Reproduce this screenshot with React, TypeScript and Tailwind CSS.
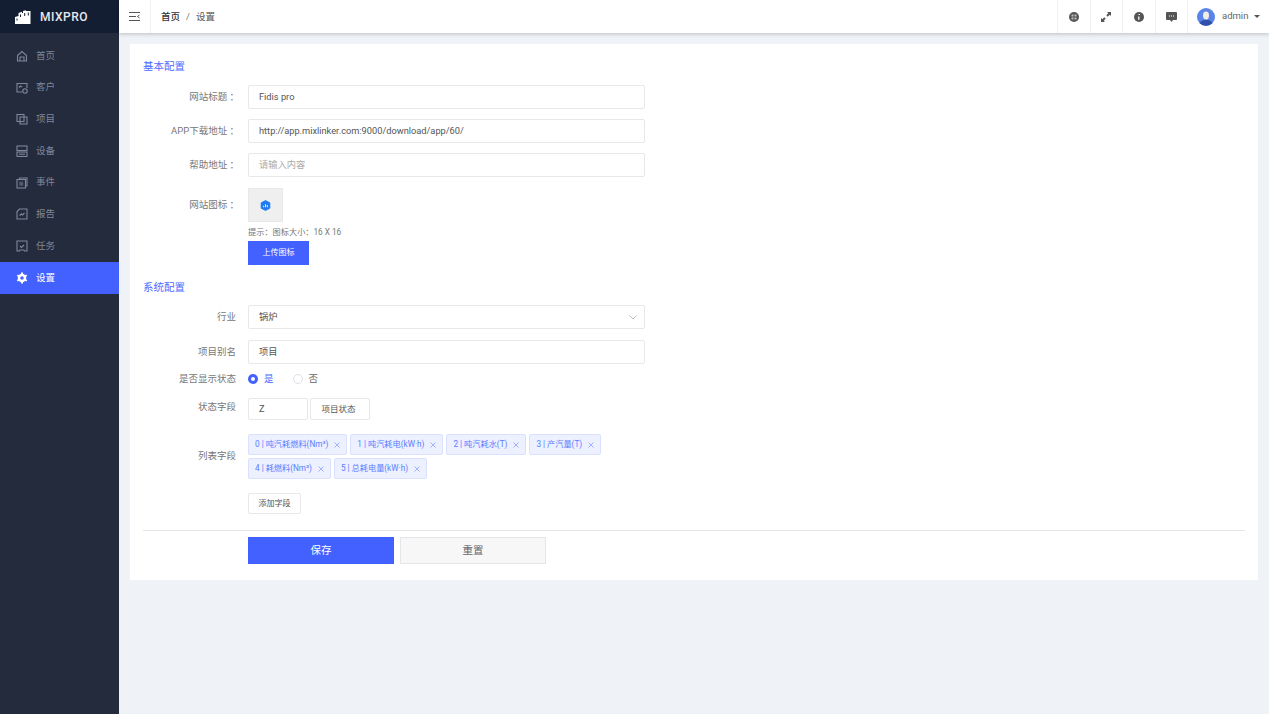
import { ReactNode } from "react"

const NAV = [
	{
		label: "首页",
		icon: (
			<>
				<path d="M1.500 5.500 6 1.500l4.500 4v5.500h-9z" />
				<path d="M4 11V7h4v4" />
			</>
		),
	},
	{
		label: "客户",
		icon: (
			<>
				<path d="M6 10H1V1.500h10V6" />
				<path d="M3 5.500l1.500-1.500L6 5" />
				<circle cx="9" cy="9" r="2.200" />
			</>
		),
	},
	{
		label: "项目",
		icon: (
			<>
				<rect x="1" y="1.500" width="7" height="7" />
				<rect x="4" y="4" width="7" height="7" />
			</>
		),
	},
	{
		label: "设备",
		icon: (
			<>
				<rect x="1" y="1" width="10" height="4.500" />
				<rect x="1" y="7" width="10" height="4.500" />
				<path d="M3 9.200h6" />
			</>
		),
	},
	{
		label: "事件",
		icon: (
			<>
				<path d="M3.500 2.500V1H11v8H9.500" />
				<rect x="1" y="2.500" width="8.500" height="8.500" />
				<rect x="3.200" y="4.700" width="4" height="4" fill="currentColor" fillOpacity="0.5" stroke="none" />
			</>
		),
	},
	{
		label: "报告",
		icon: (
			<>
				<path d="M3.500 1H11v10H1V3.500z" />
				<path d="M3.500 7.500 5.500 6l1 1L8.500 5" />
			</>
		),
	},
	{
		label: "任务",
		icon: (
			<>
				<path d="M1 1h10v10H8.500L8 10H4l-.5 1H1z" />
				<path d="m4 6 1.500 1.500L8 5" />
			</>
		),
	},
]

const TAGS = [
	"0 | 吨汽耗燃料(Nm³)",
	"1 | 吨汽耗电(kW·h)",
	"2 | 吨汽耗水(T)",
	"3 | 产汽量(T)",
	"4 | 耗燃料(Nm³)",
	"5 | 总耗电量(kW·h)",
]

function NavIcon({ children }: { children: ReactNode }) {
	return (
		<svg viewBox="0 0 12 12" className="w-3 h-3 shrink-0" fill="none" stroke="currentColor" strokeWidth="1.100">
			{children}
		</svg>
	)
}

function Sidebar() {
	return (
		<aside className="w-[119px] shrink-0 bg-[#232b3d] flex flex-col">
			<div className="h-[33px] bg-[#141e33] flex items-center pl-[15px] gap-[9px]">
				<svg viewBox="0 0 16 14" className="w-4 h-[14px]" fill="#fff">
					<path d="M0 7l3.500-1V3l3.500-1.200V3h1V1l3-.8V1h4.500v13H0z" />
					<path d="M1.500 8.500h1v2h-1zM5 4.500h1v2.500H5zM9.200 3h1v3h-1zM12.800 2.500h1v3h-1z" fill="#141e33" />
				</svg>
				<span className="text-[#e6e9ef] text-[12px] font-medium tracking-[0.5px]">MIXPRO</span>
			</div>
			<nav className="pt-[7px]">
				{NAV.map(item => (
					<div key={item.label} className="h-[31.700px] flex items-center pl-4 gap-[8px] text-[#7f8799]">
						<NavIcon>{item.icon}</NavIcon>
						<span className="text-[9.500px]">{item.label}</span>
					</div>
				))}
				<div className="h-[31.700px] flex items-center pl-4 gap-[8px] bg-[#4361ff] text-white">
					<svg viewBox="0 0 24 24" className="w-3 h-3 shrink-0" fill="none" stroke="currentColor" strokeWidth="5">
						<circle cx="12" cy="12" r="6" />
						<path d="M12 1v4M12 19v4M2.500 6.500l3.500 2M18 15.500l3.500 2M2.500 17.500l3.500-2M18 8.500l3.500-2" strokeWidth="4" />
					</svg>
					<span className="text-[9.500px]">设置</span>
				</div>
			</nav>
		</aside>
	)
}

function HeaderCell({ children }: { children: ReactNode }) {
	return (
		<div className="w-[32.500px] h-full border-l border-[#f0f0f0] flex items-center justify-center text-[#555]">
			{children}
		</div>
	)
}

function Topbar() {
	return (
		<header className="h-[33px] shrink-0 bg-white flex items-center shadow-[0_1px_4px_rgba(0,0,0,0.22)] relative">
			<div className="w-[32px] h-full flex items-center justify-center border-r border-[#f0f0f0]">
				<svg viewBox="0 0 11 9" className="w-[11px] h-[9px]" fill="none" stroke="#555" strokeWidth="1">
					<path d="M0 .5h11M0 4.500h7M0 8.500h11" />
					<path d="M10.500 3 8.500 4.500l2 1.500" />
				</svg>
			</div>
			<div className="pl-[10px] pt-[1px] text-[9.500px] text-[#333] flex gap-[6px]">
				<span className="font-medium">首页</span>
				<span className="text-[#777]">/</span>
				<span className="text-[#555]">设置</span>
			</div>
			<div className="ml-auto h-full flex">
				<HeaderCell>
					<svg viewBox="0 0 10 10" className="w-[10px] h-[10px]">
						<circle cx="5" cy="5" r="5" fill="#555" />
						<path d="M2.500 2.500h2v2h-2zM5.500 2.500h2v2h-2zM2.500 5.500h2v2h-2zM5.500 5.500h2v2h-2z" fill="#bbb" />
					</svg>
				</HeaderCell>
				<HeaderCell>
					<svg viewBox="0 0 10 10" className="w-[10px] h-[10px]" fill="#555">
						<path d="M6 0h4v4L8.700 2.700 6.700 4.700 5.300 3.300l2-2zM0 10V6l1.300 1.300 2-2 1.400 1.400-2 2L4 10z" />
					</svg>
				</HeaderCell>
				<HeaderCell>
					<svg viewBox="0 0 10 10" className="w-[10px] h-[10px]">
						<circle cx="5" cy="5" r="5" fill="#555" />
						<path d="M5.300 2v1M4.800 4.500v3.200" stroke="#fff" strokeWidth="1.300" />
					</svg>
				</HeaderCell>
				<HeaderCell>
					<svg viewBox="0 0 11 10" className="w-[11px] h-[10px]" fill="#555">
						<path d="M1 0h9a1 1 0 0 1 1 1v6a1 1 0 0 1-1 1H7L5.500 10 4 8H1a1 1 0 0 1-1-1V1a1 1 0 0 1 1-1z" />
						<path d="M3 3.500h1v1H3zM5 3.500h1v1H5zM7 3.500h1v1H7z" fill="#fff" />
					</svg>
				</HeaderCell>
				<div className="w-[82px] h-full border-l border-[#f0f0f0] flex items-center pl-[9px] gap-[7px]">
					<svg viewBox="0 0 18 18" className="w-[18px] h-[18px] shrink-0">
						<circle cx="9" cy="9" r="9" fill="#5b84e8" />
						<ellipse cx="9" cy="7.500" rx="3" ry="4" fill="#f1ece6" />
						<path d="M2.500 15c1.500-2.500 4-3 6.500-3s5 .5 6.500 3A9 9 0 0 1 2.500 15z" fill="#2f4fa8" />
					</svg>
					<span className="text-[9.500px] text-[#666]">admin</span>
					<span className="-ml-[1px] w-0 h-0 border-x-[3.500px] border-x-transparent border-t-[3.500px] border-t-[#555]" />
				</div>
			</div>
		</header>
	)
}

function Row({
	label,
	className,
	labelClass,
	children,
}: {
	label: string
	className?: string
	labelClass?: string
	children: ReactNode
}) {
	return (
		<div className={`flex ${className ?? ""}`}>
			<div className={`w-[93px] shrink-0 text-right text-[9.500px] text-[#777] ${labelClass ?? ""}`}>{label}</div>
			<div className="ml-[12px] flex-1 min-w-0">{children}</div>
		</div>
	)
}

function Field({ value, placeholder }: { value?: string; placeholder?: string }) {
	return (
		<div className={`w-[397px] h-[24px] bg-white border border-[#e6e8eb] rounded-[2px] flex items-center pl-[10px] text-[9.250px] ${placeholder ? "text-[#aaa]" : "text-[#555]"}`}>
			{value ?? placeholder}
		</div>
	)
}

function Heading({ children, className }: { children: ReactNode; className?: string }) {
	return <h2 className={`text-[10.500px] leading-[14px] font-normal text-[#4a6cff] ${className ?? ""}`}>{children}</h2>
}

function SettingsForm() {
	return (
		<section className="bg-white pt-[16px] px-[13px] pb-[16px]">
			<Heading>基本配置</Heading>
			<Row label="网站标题 ：" labelClass="translate-x-[3px]" className="mt-[11px] items-center">
				<Field value="Fidis pro" />
			</Row>
			<Row label="APP下载地址 ：" labelClass="translate-x-[3px]" className="mt-[10px] items-center">
				<Field value="http://app.mixlinker.com:9000/download/app/60/" />
			</Row>
			<Row label="帮助地址 ：" labelClass="translate-x-[3px]" className="mt-[10px] items-center">
				<Field placeholder="请输入内容" />
			</Row>
			<Row label="网站图标 ：" labelClass="translate-x-[3px] pt-[10px]" className="mt-[11px]">
				<div className="w-[35px] h-[34px] bg-[#efefef] border border-[#e8e8e8] flex items-center justify-center">
					<svg viewBox="0 0 12 12" className="w-[11px] h-[11px]">
						<path d="M6 .5 10.800 3v6L6 11.500 1.200 9V3z" fill="#1f7bf2" stroke="#1f7bf2" strokeWidth="0.800" strokeLinejoin="round" />
						<path d="M3.500 8V6.200h1V8zM5.500 8V4.500h1V8zM7.500 8V5.500h1V8z" fill="#fff" />
					</svg>
				</div>
				<div className="mt-[4px] text-[8.200px] leading-[12px] text-[#777]">提示：图标大小：16 X 16</div>
				<div className="mt-[3px] w-[61px] h-[24px] bg-[#4361ff] flex items-center justify-center text-[8px] text-white">
					上传图标
				</div>
			</Row>

			<Heading className="mt-[16px]">系统配置</Heading>
			<Row label="行业" className="mt-[10px] items-center">
				<div className="w-[397px] h-[24px] bg-white border border-[#e6e8eb] rounded-[2px] flex items-center justify-between pl-[10px] pr-[7px] text-[9.250px] text-[#555]">
					<span>锅炉</span>
					<svg viewBox="0 0 8 5" className="w-2 h-[5px]" fill="none" stroke="#aaa" strokeWidth="0.800">
						<path d="m.5.500 3.500 3.500L7.500.500" />
					</svg>
				</div>
			</Row>
			<Row label="项目别名" className="mt-[11px] items-center">
				<Field value="项目" />
			</Row>
			<Row label="是否显示状态" className="mt-[8px] h-[14px] items-center">
				<div className="flex items-center text-[9.500px]">
					<span className="w-[10px] h-[10px] rounded-full bg-[#4361ff] flex items-center justify-center">
						<span className="w-[4px] h-[4px] rounded-full bg-white" />
					</span>
					<span className="ml-[6px] text-[#4a6cff]">是</span>
					<span className="ml-[19px] w-[10px] h-[10px] rounded-full border border-[#dcdfe6]" />
					<span className="ml-[6px] text-[#666]">否</span>
				</div>
			</Row>
			<Row label="状态字段" labelClass="pt-[2px]" className="mt-[12px] items-start">
				<div className="flex gap-[2px]">
					<div className="w-[60px] h-[22px] border border-[#e6e8eb] rounded-[2px] flex items-center pl-[10px] text-[9.250px] text-[#555]">Z</div>
					<div className="w-[60px] h-[22px] border border-[#e6e8eb] rounded-[2px] flex items-center justify-center pr-[3px] text-[8.500px] text-[#555]">项目状态</div>
				</div>
			</Row>
			<Row label="列表字段" className="mt-[14px] items-center">
				<div className="flex flex-wrap gap-[3px] w-[356px]">
					{TAGS.map(tag => (
						<div key={tag} className="h-[21px] px-[6px] bg-[#ecf0ff] border border-[#d9e1ff] rounded-[2px] flex items-center gap-[6px] text-[8.200px] text-[#5c7cff]">
							<span>{tag}</span>
							<svg viewBox="0 0 6 6" className="w-[6px] h-[6px]" fill="none" stroke="#7c93ff" strokeWidth="0.700">
								<path d="m.5.500 5 5M5.500.500l-5 5" />
							</svg>
						</div>
					))}
				</div>
			</Row>
			<Row label="" className="mt-[14px]">
				<div className="w-[53px] h-[21px] border border-[#e6e8eb] rounded-[2px] flex items-center justify-center text-[8px] text-[#555]">
					添加字段
				</div>
			</Row>
			<div className="mt-[16px] border-t border-[#e4e6ea] pt-[6px] pl-[105px] flex gap-[6px]">
				<div className="w-[146px] h-[27px] bg-[#4361ff] flex items-center justify-center text-[10.500px] text-white">保存</div>
				<div className="w-[146px] h-[27px] bg-[#f7f7f7] border border-[#e4e6ea] flex items-center justify-center text-[10.500px] text-[#666]">重置</div>
			</div>
		</section>
	)
}

export default function App() {
	return (
		<div className="flex h-screen overflow-hidden bg-[#eff2f6] font-['Roboto','Noto_Sans_CJK_SC',sans-serif]">
			<Sidebar />
			<div className="flex-1 min-w-0 flex flex-col">
				<Topbar />
				<main className="pt-[11px] pl-[11px] pr-[11px]">
					<SettingsForm />
				</main>
			</div>
		</div>
	)
}
